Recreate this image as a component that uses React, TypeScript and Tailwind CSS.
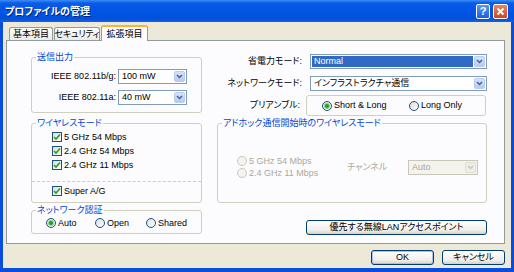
import type { ReactNode } from "react";
import clsx from "clsx";

function DropButton({ disabled }: { disabled?: boolean }) {
  return (
    <div
      className={clsx(
        "flex w-[11px] items-center justify-center rounded-[2px] border",
        disabled
          ? "border-[#E2E0D6] bg-[#EFEDE5]"
          : "border-[#B9CBF3] bg-[linear-gradient(to_bottom,#D6E1FB,#B7CAF5)]",
      )}
    >
      <svg width="7" height="5" viewBox="0 0 7 5">
        <path
          d="M1 1 L3.5 3.5 L6 1"
          fill="none"
          stroke={disabled ? "#C9C7BA" : "#4D6185"}
          strokeWidth="1.5"
        />
      </svg>
    </div>
  );
}

function Combo({
  value,
  highlighted,
  disabled,
  className,
}: {
  value: string;
  highlighted?: boolean;
  disabled?: boolean;
  className?: string;
}) {
  return (
    <div
      className={clsx(
        "flex h-[15px] items-stretch border p-[1px]",
        disabled ? "border-[#C9C7BA] bg-[#F4F3EE]" : "border-[#7F9DB9] bg-white",
        className,
      )}
    >
      <div
        className={clsx(
          "mr-[1px] flex flex-1 items-center pl-[2px] leading-none",
          highlighted && "bg-[#316AC5] text-white",
          disabled && "text-[#ACA899]",
        )}
      >
        {value}
      </div>
      <DropButton disabled={disabled} />
    </div>
  );
}

function Checkbox({ label }: { label: string }) {
  return (
    <div className="flex h-[14px] items-center gap-[2px]">
      <span className="flex h-[10px] w-[10px] items-center justify-center border border-[#1C5180] bg-[linear-gradient(135deg,#DCDCD7,#FFFFFF)]">
        <svg width="8" height="8" viewBox="0 0 8 8">
          <path d="M1 4 L3 6 L7 1.5" fill="none" stroke="#21A121" strokeWidth="1.6" />
        </svg>
      </span>
      <span className="leading-none">{label}</span>
    </div>
  );
}

function Radio({ label, checked, disabled, className }: { label: string; checked?: boolean; disabled?: boolean; className?: string }) {
  return (
    <div className={clsx("flex items-center gap-[2px]", className)}>
      <span
        className={clsx(
          "flex h-[10px] w-[10px] items-center justify-center rounded-full border",
          disabled ? "border-[#CAC8BB] bg-[#F4F3EE]" : "border-[#1C5180] bg-[linear-gradient(135deg,#DCDCD7,#FFFFFF)]",
        )}
      >
        {checked && <span className="h-[4px] w-[4px] rounded-full bg-[#21A121] shadow-[0_0_0_1px_#8ED48E]" />}
      </span>
      <span className={clsx("leading-none", disabled && "text-[#ACA899]")}>{label}</span>
    </div>
  );
}

function Group({ title, className, children }: { title?: string; className?: string; children: ReactNode }) {
  return (
    <fieldset className={clsx("rounded-[3px] border border-[#D0D0BF]", className)}>
      {title && <legend className="ml-[4px] px-[1px] leading-[12px] text-[#0046D5]">{title}</legend>}
      {children}
    </fieldset>
  );
}

function XpButton({ children, isDefault, className }: { children: ReactNode; isDefault?: boolean; className?: string }) {
  return (
    <div
      className={clsx(
        "flex h-[15px] items-center justify-center rounded-[3px] border border-[#003C74] bg-[linear-gradient(to_bottom,#FFFFFF,#F0EFEA_70%,#D8D2C6)] leading-none",
        isDefault && "shadow-[inset_0_0_0_1px_#A6C2F0]",
        className,
      )}
    >
      {children}
    </div>
  );
}

export default function App() {
  return (
    <div className="flex h-[272px] w-[514px] flex-col whitespace-nowrap bg-[#0A4CDC] text-[9px] text-black [font-family:'Liberation_Sans','Noto_Sans_CJK_JP',sans-serif] [font-feature-settings:'palt']">
      <div className="flex h-[22px] items-center bg-[linear-gradient(to_bottom,#3D8DF7_0%,#0A5BE8_14%,#0055E3_50%,#0051DC_85%,#1760E4_100%)] pl-[5px] pr-[6px]">
        <span className="text-[10px] font-bold text-white [text-shadow:1px_1px_#0A1E7A]">プロファイルの管理</span>
        <div className="ml-auto flex gap-[3px]">
          <div className="flex h-[15px] w-[14px] items-center justify-center rounded-[2px] border border-white bg-[linear-gradient(to_bottom,#5A95F7,#1F5FD9)] text-[11px] font-bold leading-none text-white">
            ?
          </div>
          <div className="flex h-[15px] w-[15px] items-center justify-center rounded-[2px] border border-white bg-[linear-gradient(to_bottom,#EE8662,#D0471E)]">
            <svg width="9" height="9" viewBox="0 0 9 9">
              <path d="M1.5 1.5 L7.5 7.5 M7.5 1.5 L1.5 7.5" stroke="white" strokeWidth="1.8" />
            </svg>
          </div>
        </div>
      </div>

      <div className="mx-[3px] mb-[4px] flex flex-1 flex-col bg-[#ECE9D8] pt-[3px]">
        <div className="ml-[6px] flex h-[15px] items-end gap-[1px]">
          <div className="flex h-[13px] w-[44px] items-center justify-center rounded-t-[3px] border border-b-0 border-[#919B9C] bg-[linear-gradient(to_bottom,#FFFFFF,#ECEBE6)] leading-none">
            基本項目
          </div>
          <div className="flex h-[13px] w-[46px] items-center justify-center rounded-t-[3px] border border-b-0 border-[#919B9C] bg-[linear-gradient(to_bottom,#FFFFFF,#ECEBE6)] leading-none tracking-[-0.3px]">
            セキュリティ
          </div>
          <div className="relative z-10 -mb-[1px] flex h-[16px] w-[47px] items-center justify-center rounded-t-[3px] border-x border-t-2 border-x-[#919B9C] border-t-[#F5B43C] bg-[#FCFCFE] leading-none">
            拡張項目
          </div>
        </div>

        <div className="ml-[3px] mr-[6px] h-[204px] border border-[#919B9C] bg-[#FCFCFE] pl-[24px] pt-[10px]">
          <div className="grid grid-cols-[171px_270px] grid-rows-[66px_87px_31px] gap-x-[15px]">
            <Group title="送信出力" className="h-[62px] self-start">
              <div className="flex flex-col gap-[6px] pt-[6px]">
                <div className="flex items-center gap-[2px]">
                  <span className="w-[84px] text-right leading-none">IEEE 802.11b/g:</span>
                  <Combo value="100 mW" className="w-[69px]" />
                </div>
                <div className="flex items-center gap-[2px]">
                  <span className="w-[84px] text-right leading-none">IEEE 802.11a:</span>
                  <Combo value="40 mW" className="w-[69px]" />
                </div>
              </div>
            </Group>

            <div className="flex flex-col">
              <div className="mt-[3px] flex items-center gap-[8px]">
                <span className="w-[85px] text-right leading-none">省電力モード:</span>
                <Combo value="Normal" highlighted className="w-[177px]" />
              </div>
              <div className="mt-[7px] flex items-center gap-[8px]">
                <span className="w-[85px] text-right leading-none">ネットワークモード:</span>
                <Combo value="インフラストラクチャ通信" className="w-[177px]" />
              </div>
              <div className="mt-[4px] flex items-center gap-[6px]">
                <span className="w-[83px] text-right leading-none">プリアンブル:</span>
                <Group className="flex h-[21px] w-[180px] items-center pl-[15px]">
                  <Radio label="Short & Long" checked className="w-[87px]" />
                  <Radio label="Long Only" />
                </Group>
              </div>
            </div>

            <Group title="ワイヤレスモード" className="h-[86px] self-start">
              <div className="pl-[20px] pt-[1px]">
                <Checkbox label="5 GHz 54 Mbps" />
                <Checkbox label="2.4 GHz 54 Mbps" />
                <Checkbox label="2.4 GHz 11 Mbps" />
              </div>
              <div className="mt-[9px] border-t border-dashed border-[#CFCDC0]" />
              <div className="mt-[2px] pl-[20px]">
                <Checkbox label="Super A/G" />
              </div>
            </Group>

            <Group title="アドホック通信開始時のワイヤレスモード" className="h-[86px] self-start">
              <div className="flex h-[73px] items-center pl-[19px] pt-[3px]">
                <div className="flex w-[110px] flex-col">
                  <Radio label="5 GHz 54 Mbps" disabled className="h-[12px]" />
                  <Radio label="2.4 GHz 11 Mbps" disabled className="h-[12px]" />
                </div>
                <span className="w-[61px] leading-none text-[#ACA899]">チャンネル</span>
                <Combo value="Auto" disabled className="w-[70px]" />
              </div>
            </Group>

            <Group title="ネットワーク認証" className="h-[30px] self-start">
              <div className="flex items-center pl-[14px] pt-[1px]">
                <Radio label="Auto" checked className="h-[12px] w-[49px]" />
                <Radio label="Open" className="h-[12px] w-[51px]" />
                <Radio label="Shared" className="h-[12px]" />
              </div>
            </Group>

            <XpButton className="w-[181px] self-end justify-self-end">優先する無線LANアクセスポイント</XpButton>
          </div>
        </div>

        <div className="mt-[6px] flex justify-end gap-[8px] pr-[6px]">
          <XpButton isDefault className="h-[14px] w-[63px]">
            OK
          </XpButton>
          <XpButton className="h-[14px] w-[63px]">キャンセル</XpButton>
        </div>
      </div>
    </div>
  );
}
